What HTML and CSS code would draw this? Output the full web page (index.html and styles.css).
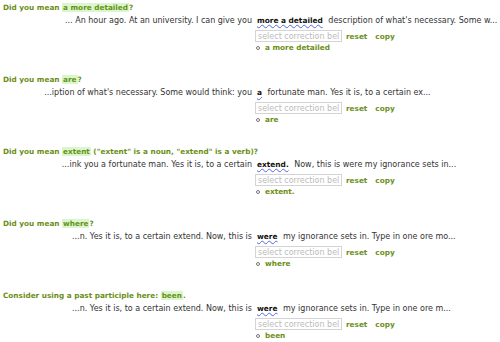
FILE: index.html
```html
<!DOCTYPE html>
<html lang="en">
<head>
  <meta charset="UTF-8" />
  <title>Check results</title>
  <link rel="stylesheet" href="styles.css">
</head>
<body>
  <div class="issue">
    <div class="msg">Did you mean <span class="hl">a more detailed</span>?</div>
    <div class="ctx">
      <div class="before">... An hour ago. At an university. I can give you</div>
      <div class="main">
        <div class="line"><span class="err">more a detailed</span> description of what's necessary. Some w...</div>
        <div class="tools">
          <input class="pick" type="text" placeholder="select correction below" />
          <a class="act">reset</a>
          <a class="act">copy</a>
        </div>
        <ul class="opts"><li>a more detailed</li></ul>
      </div>
    </div>
  </div>

  <div class="issue">
    <div class="msg">Did you mean <span class="hl">are</span>?</div>
    <div class="ctx">
      <div class="before">...iption of what's necessary. Some would think: you</div>
      <div class="main">
        <div class="line"><span class="err">a</span> fortunate man. Yes it is, to a certain ex...</div>
        <div class="tools">
          <input class="pick" type="text" placeholder="select correction below" />
          <a class="act">reset</a>
          <a class="act">copy</a>
        </div>
        <ul class="opts"><li>are</li></ul>
      </div>
    </div>
  </div>

  <div class="issue">
    <div class="msg">Did you mean <span class="hl">extent</span> ("extent" is a noun, "extend" is a verb)?</div>
    <div class="ctx">
      <div class="before">...ink you a fortunate man. Yes it is, to a certain</div>
      <div class="main">
        <div class="line"><span class="err">extend.</span> Now, this is were my ignorance sets in...</div>
        <div class="tools">
          <input class="pick" type="text" placeholder="select correction below" />
          <a class="act">reset</a>
          <a class="act">copy</a>
        </div>
        <ul class="opts"><li>extent.</li></ul>
      </div>
    </div>
  </div>

  <div class="issue">
    <div class="msg">Did you mean <span class="hl">where</span>?</div>
    <div class="ctx">
      <div class="before">...n. Yes it is, to a certain extend. Now, this is</div>
      <div class="main">
        <div class="line"><span class="err">were</span> my ignorance sets in. Type in one ore mo...</div>
        <div class="tools">
          <input class="pick" type="text" placeholder="select correction below" />
          <a class="act">reset</a>
          <a class="act">copy</a>
        </div>
        <ul class="opts"><li>where</li></ul>
      </div>
    </div>
  </div>

  <div class="issue">
    <div class="msg">Consider using a past participle here: <span class="hl">been</span>.</div>
    <div class="ctx">
      <div class="before">...n. Yes it is, to a certain extend. Now, this is</div>
      <div class="main">
        <div class="line"><span class="err">were</span> my ignorance sets in. Type in one ore m...</div>
        <div class="tools">
          <input class="pick" type="text" placeholder="select correction below" />
          <a class="act">reset</a>
          <a class="act">copy</a>
        </div>
        <ul class="opts"><li>been</li></ul>
      </div>
    </div>
  </div>
</body>
</html>
```

FILE: styles.css
```css
body {
  margin: 0;
  padding: 3px 0 0 3px;
  background: #fff;
  color: #333;
  font-family: "DejaVu Sans", Verdana, sans-serif;
  font-size: 8px;
}

.issue {
  margin-bottom: 22px;
}

.issue:last-child {
  margin-bottom: 0;
}

.msg {
  line-height: 10px;
  font-size: 7.3px;
  font-weight: bold;
  color: #6b8f18;
  white-space: nowrap;
}

.hl {
  background: #d9f7cc;
  padding: 0 1px;
}

.ctx {
  display: grid;
  grid-template-columns: 249px 1fr;
  margin-top: 3px;
}

.before {
  line-height: 10px;
  text-align: right;
  white-space: nowrap;
}

.main {
  white-space: nowrap;
  overflow: hidden;
}

.line {
  line-height: 10px;
}

.err {
  font-size: 7.4px;
  font-weight: bold;
  color: #111;
  padding: 0 3px 0 5px;
  text-decoration: underline wavy #5566e0;
  text-decoration-thickness: 0.5px;
  text-underline-offset: 1px;
}

.tools {
  display: flex;
  align-items: center;
  margin-top: 4px;
  padding-left: 3px;
}

.pick {
  width: 87px;
  height: 12px;
  box-sizing: border-box;
  margin: 0;
  padding: 0 2px;
  border: 1px solid #d4d4d4;
  font-family: inherit;
  font-size: 8px;
  color: #333;
}

.pick::placeholder {
  color: #bbb;
}

.act {
  font-size: 7.3px;
  font-weight: bold;
  color: #6b8f18;
  margin-left: 4px;
  margin-right: 4px;
  cursor: pointer;
}

.opts {
  list-style: none;
  margin: 1px 0 0;
  padding: 0 0 0 4px;
  line-height: 10px;
}

.opts li {
  display: flex;
  align-items: center;
  font-size: 7.3px;
  font-weight: bold;
  color: #6b8f18;
}

.opts li::before {
  content: "";
  width: 2px;
  height: 2px;
  border: 1px solid #777;
  border-radius: 50%;
  margin-right: 5px;
}
```
